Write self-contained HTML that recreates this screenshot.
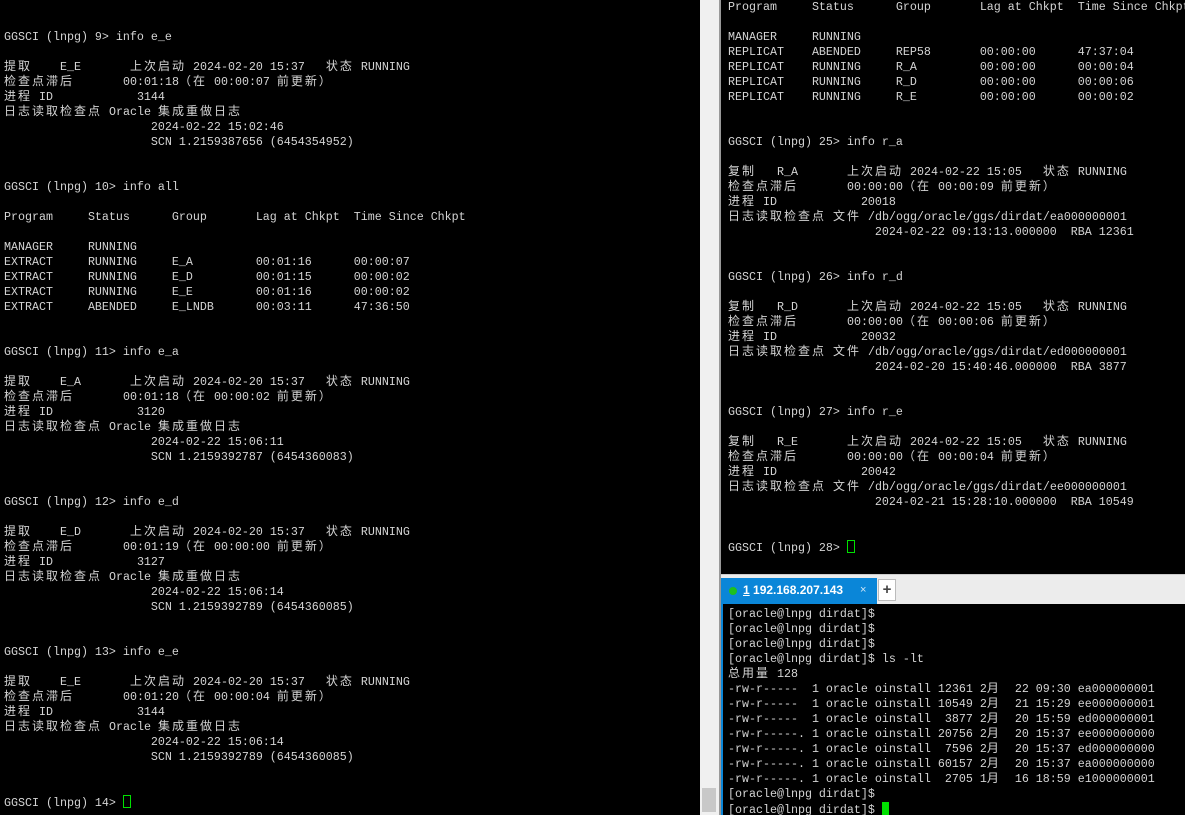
<!DOCTYPE html>
<html><head><meta charset="utf-8"><style>
*{margin:0;padding:0;box-sizing:border-box}
body{width:1185px;height:815px;overflow:hidden;background:#000;position:relative;font-family:"Liberation Mono",monospace;font-size:11.67px;color:#d4d4d4}
pre{position:absolute;font:inherit;line-height:15px;white-space:pre;overflow:hidden}
pre div{height:15px;line-height:15px;overflow:visible;white-space:pre}
.w{font-size:12px;letter-spacing:2px;font-family:"Noto Sans CJK SC","WenQuanYi Zen Hei",sans-serif;line-height:0}
.cur{display:inline-block;width:8px;height:13px;border:1.5px solid #00e000;vertical-align:-2px;line-height:0}
.fc{display:inline-block;width:7px;height:13px;background:#00e000;vertical-align:-2px;line-height:0}
</style></head><body>
<pre id="L" style="left:4px;top:0;width:696px;height:815px">


GGSCI (lnpg) 9> info e_e

提取    E_E       上次启动 2024-02-20 15:37   状态 RUNNING
检查点滞后       00:01:18（在 00:00:07 前更新）
进程 ID            3144
日志读取检查点 Oracle 集成重做日志
                     2024-02-22 15:02:46
                     SCN 1.2159387656 (6454354952)


GGSCI (lnpg) 10> info all

Program     Status      Group       Lag at Chkpt  Time Since Chkpt

MANAGER     RUNNING
EXTRACT     RUNNING     E_A         00:01:16      00:00:07
EXTRACT     RUNNING     E_D         00:01:15      00:00:02
EXTRACT     RUNNING     E_E         00:01:16      00:00:02
EXTRACT     ABENDED     E_LNDB      00:03:11      47:36:50


GGSCI (lnpg) 11> info e_a

提取    E_A       上次启动 2024-02-20 15:37   状态 RUNNING
检查点滞后       00:01:18（在 00:00:02 前更新）
进程 ID            3120
日志读取检查点 Oracle 集成重做日志
                     2024-02-22 15:06:11
                     SCN 1.2159392787 (6454360083)


GGSCI (lnpg) 12> info e_d

提取    E_D       上次启动 2024-02-20 15:37   状态 RUNNING
检查点滞后       00:01:19（在 00:00:00 前更新）
进程 ID            3127
日志读取检查点 Oracle 集成重做日志
                     2024-02-22 15:06:14
                     SCN 1.2159392789 (6454360085)


GGSCI (lnpg) 13> info e_e

提取    E_E       上次启动 2024-02-20 15:37   状态 RUNNING
检查点滞后       00:01:20（在 00:00:04 前更新）
进程 ID            3144
日志读取检查点 Oracle 集成重做日志
                     2024-02-22 15:06:14
                     SCN 1.2159392789 (6454360085)


GGSCI (lnpg) 14> <span class="cur"></span></pre>
<div style="position:absolute;left:700px;top:0;width:20px;height:815px;background:#f0f0f0"></div>
<div style="position:absolute;left:702px;top:788px;width:14px;height:24px;background:#c8c8c8"></div>
<div style="position:absolute;left:719px;top:0;width:2px;height:815px;background:#999"></div>
<pre id="R" style="left:728px;top:0;width:457px;height:574px">Program     Status      Group       Lag at Chkpt  Time Since Chkpt

MANAGER     RUNNING
REPLICAT    ABENDED     REP58       00:00:00      47:37:04
REPLICAT    RUNNING     R_A         00:00:00      00:00:04
REPLICAT    RUNNING     R_D         00:00:00      00:00:06
REPLICAT    RUNNING     R_E         00:00:00      00:00:02


GGSCI (lnpg) 25> info r_a

复制   R_A       上次启动 2024-02-22 15:05   状态 RUNNING
检查点滞后       00:00:00（在 00:00:09 前更新）
进程 ID            20018
日志读取检查点 文件 /db/ogg/oracle/ggs/dirdat/ea000000001
                     2024-02-22 09:13:13.000000  RBA 12361


GGSCI (lnpg) 26> info r_d

复制   R_D       上次启动 2024-02-22 15:05   状态 RUNNING
检查点滞后       00:00:00（在 00:00:06 前更新）
进程 ID            20032
日志读取检查点 文件 /db/ogg/oracle/ggs/dirdat/ed000000001
                     2024-02-20 15:40:46.000000  RBA 3877


GGSCI (lnpg) 27> info r_e

复制   R_E       上次启动 2024-02-22 15:05   状态 RUNNING
检查点滞后       00:00:00（在 00:00:04 前更新）
进程 ID            20042
日志读取检查点 文件 /db/ogg/oracle/ggs/dirdat/ee000000001
                     2024-02-21 15:28:10.000000  RBA 10549


GGSCI (lnpg) 28> <span class="cur"></span></pre>
<div style="position:absolute;left:721px;top:574px;width:464px;height:30px;background:#ececec;border-top:1px solid #ccc"></div>
<div style="position:absolute;left:721px;top:578px;width:156px;height:26px;background:#0a86d8;color:#fff;font:bold 12px 'Liberation Sans',sans-serif;line-height:25px">
<span style="position:absolute;left:8px;top:9px;width:8px;height:8px;border-radius:50%;background:#1ec01e"></span>
<span style="position:absolute;left:22px"><u>1</u> 192.168.207.143</span>
<span style="position:absolute;left:139px;font-weight:normal;color:#cfe6f7;font-size:11px">×</span></div>
<div style="position:absolute;left:878px;top:579px;width:18px;height:22px;background:#fff;border:1px solid #bbb;font:bold 15px 'Liberation Sans',sans-serif;color:#444;text-align:center;line-height:20px">+</div>
<div style="position:absolute;left:721px;top:603px;width:2px;height:212px;background:#0a86d8"></div>
<pre id="B" style="left:728px;top:607px;width:457px;height:208px">[oracle@lnpg dirdat]$
[oracle@lnpg dirdat]$
[oracle@lnpg dirdat]$
[oracle@lnpg dirdat]$ ls -lt
总用量 128
-rw-r-----  1 oracle oinstall 12361 2月  22 09:30 ea000000001
-rw-r-----  1 oracle oinstall 10549 2月  21 15:29 ee000000001
-rw-r-----  1 oracle oinstall  3877 2月  20 15:59 ed000000001
-rw-r-----. 1 oracle oinstall 20756 2月  20 15:37 ee000000000
-rw-r-----. 1 oracle oinstall  7596 2月  20 15:37 ed000000000
-rw-r-----. 1 oracle oinstall 60157 2月  20 15:37 ea000000000
-rw-r-----. 1 oracle oinstall  2705 1月  16 18:59 e1000000001
[oracle@lnpg dirdat]$
[oracle@lnpg dirdat]$ <span class="fc"></span></pre>
<script>
document.querySelectorAll('pre').forEach(function(p){
 var h=p.innerHTML.replace(/([\u3000-\u9fff\uff00-\uffef]+)/g,'<span class="w">$1</span>');
 p.innerHTML=h.split('\n').map(function(l){return '<div>'+(l||' ')+'</div>';}).join('');
});
</script>
</body></html>
